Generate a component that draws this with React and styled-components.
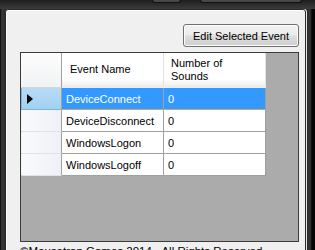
import React from "react";
import styled, { createGlobalStyle } from "styled-components";

const GlobalStyle = createGlobalStyle`
  html, body {
    margin: 0;
    padding: 0;
    background: #111;
  }
  body {
    font-family: "Liberation Sans", Arial, sans-serif;
  }
`;

const Frame = styled.div`
  width: 315px;
  height: 250px;
  overflow: hidden;
  box-sizing: border-box;
  background: linear-gradient(90deg, #0a0a0a 0px, #3a3a3a 2px, #2c2c2c 5px, #2c2c2c 308px, #3a3a3a 310px, #050505 312px);
  display: flex;
  flex-direction: column;
`;

const Caption = styled.div`
  height: 9px;
  flex: none;
  display: flex;
  align-items: flex-start;
  background: linear-gradient(180deg, #1e1e1e, #3b3b3b);
`;

const CaptionButton = styled.div`
  width: ${({ w }) => w}px;
  height: 2px;
  margin-left: ${({ gap }) => gap}px;
  border: 1px solid #111;
  border-top: none;
  border-radius: 0 0 3px 3px;
  background: #474747;
`;

const Client = styled.div`
  flex: 1;
  margin: 0 9px 0 5px;
  border: 1px solid #2a2a2a;
  border-top-left-radius: 3px;
  border-top-right-radius: 3px;
  box-shadow: inset 1px 1px 0 #fff, 1px 0 0 #e8e8e8;
  background: #f0f0f0;
  display: flex;
  flex-direction: column;
  padding: 14px 6px 0 14px;
`;

const Toolbar = styled.div`
  display: flex;
  justify-content: flex-end;
`;

const Button = styled.button`
  width: 116px;
  height: 23px;
  border: 1px solid #707070;
  border-radius: 3px;
  background: linear-gradient(180deg, #f2f2f2 0%, #ebebeb 48%, #dddddd 52%, #cfcfcf 100%);
  box-shadow: inset 0 0 0 1px #fcfcfc;
  font-family: "Liberation Sans", Arial, sans-serif;
  font-size: 11px;
  color: #000;
  padding: 0;
`;

const Grid = styled.div`
  margin-top: 5px;
  height: 190px;
  box-sizing: border-box;
  border: 1px solid #3c3c3c;
  background: #ababab;
  display: flex;
  flex-direction: column;
`;

const Row = styled.div`
  display: grid;
  grid-template-columns: 41px 102px 102px;
  height: ${({ h }) => h}px;
  flex: none;
`;

const Corner = styled.div`
  background: linear-gradient(180deg, #fdfdfd, #f1f2f4);
  border-right: 1px solid #a0a0a0;
  border-bottom: 1px solid #d5d5d5;
`;

const HeadCell = styled.div`
  box-sizing: border-box;
  background: linear-gradient(180deg, #ffffff 0%, #ffffff 80%, #f2f2f2 100%);
  border-right: 1px solid #e3e3e3;
  border-bottom: 3px solid #eceef0;
  font-size: 11px;
  line-height: 13px;
  color: #000;
  display: flex;
  align-items: center;
  padding: 1px 0 0 ${({ pad }) => pad}px;
`;

const RowHead = styled.div`
  box-sizing: border-box;
  background: ${({ active }) =>
    active ? "linear-gradient(180deg, #b7dcf7, #a2d0f2)" : "linear-gradient(90deg, #f9fafc, #eef1f6)"};
  border-right: 1px solid #a0a0a0;
  border-bottom: 1px solid ${({ active }) => (active ? "#7fb3dc" : "#dfe3e8")};
  border-left: 1px solid ${({ active }) => (active ? "#7fb3dc" : "transparent")};
  display: flex;
  align-items: center;
  padding-left: 5px;
`;

const Cell = styled.div`
  box-sizing: border-box;
  background: ${({ active }) => (active ? "#3399ff" : "#ffffff")};
  color: ${({ active }) => (active ? "#ffffff" : "#000000")};
  border-right: 1px solid #a0a0a0;
  border-bottom: 1px solid ${({ active }) => (active ? "#c9a57a" : "#a0a0a0")};
  font-size: 11px;
  display: flex;
  align-items: center;
  padding-left: 4px;
  padding-top: 1px;
`;

const Footer = styled.div`
  margin-top: 3px;
  font-size: 11.5px;
  color: #000;
  white-space: nowrap;
`;

const Arrow = () => (
  <svg width="6" height="10" viewBox="0 0 6 10">
    <path d="M0 0 L6 5 L0 10 Z" fill="#000" />
  </svg>
);

const events = [
  { name: "DeviceConnect", count: 0 },
  { name: "DeviceDisconnect", count: 0 },
  { name: "WindowsLogon", count: 0 },
  { name: "WindowsLogoff", count: 0 },
];

export default function App() {
  return (
    <>
      <GlobalStyle />
      <Frame>
        <Caption>
          <CaptionButton w={27} gap={152} />
          <CaptionButton w={100} gap={19} />
        </Caption>
        <Client>
          <Toolbar>
            <Button>Edit Selected Event</Button>
          </Toolbar>
          <Grid>
            <Row h={35}>
              <Corner />
              <HeadCell pad={8}>Event Name</HeadCell>
              <HeadCell pad={7}>
                Number of
                <br />
                Sounds
              </HeadCell>
            </Row>
            {events.map((ev, i) => (
              <Row h={22} key={ev.name}>
                <RowHead active={i === 0}>{i === 0 && <Arrow />}</RowHead>
                <Cell active={i === 0}>{ev.name}</Cell>
                <Cell active={i === 0}>{ev.count}</Cell>
              </Row>
            ))}
          </Grid>
          <Footer>©Mousetrap Games 2014 - All Rights Reserved</Footer>
        </Client>
      </Frame>
    </>
  );
}
